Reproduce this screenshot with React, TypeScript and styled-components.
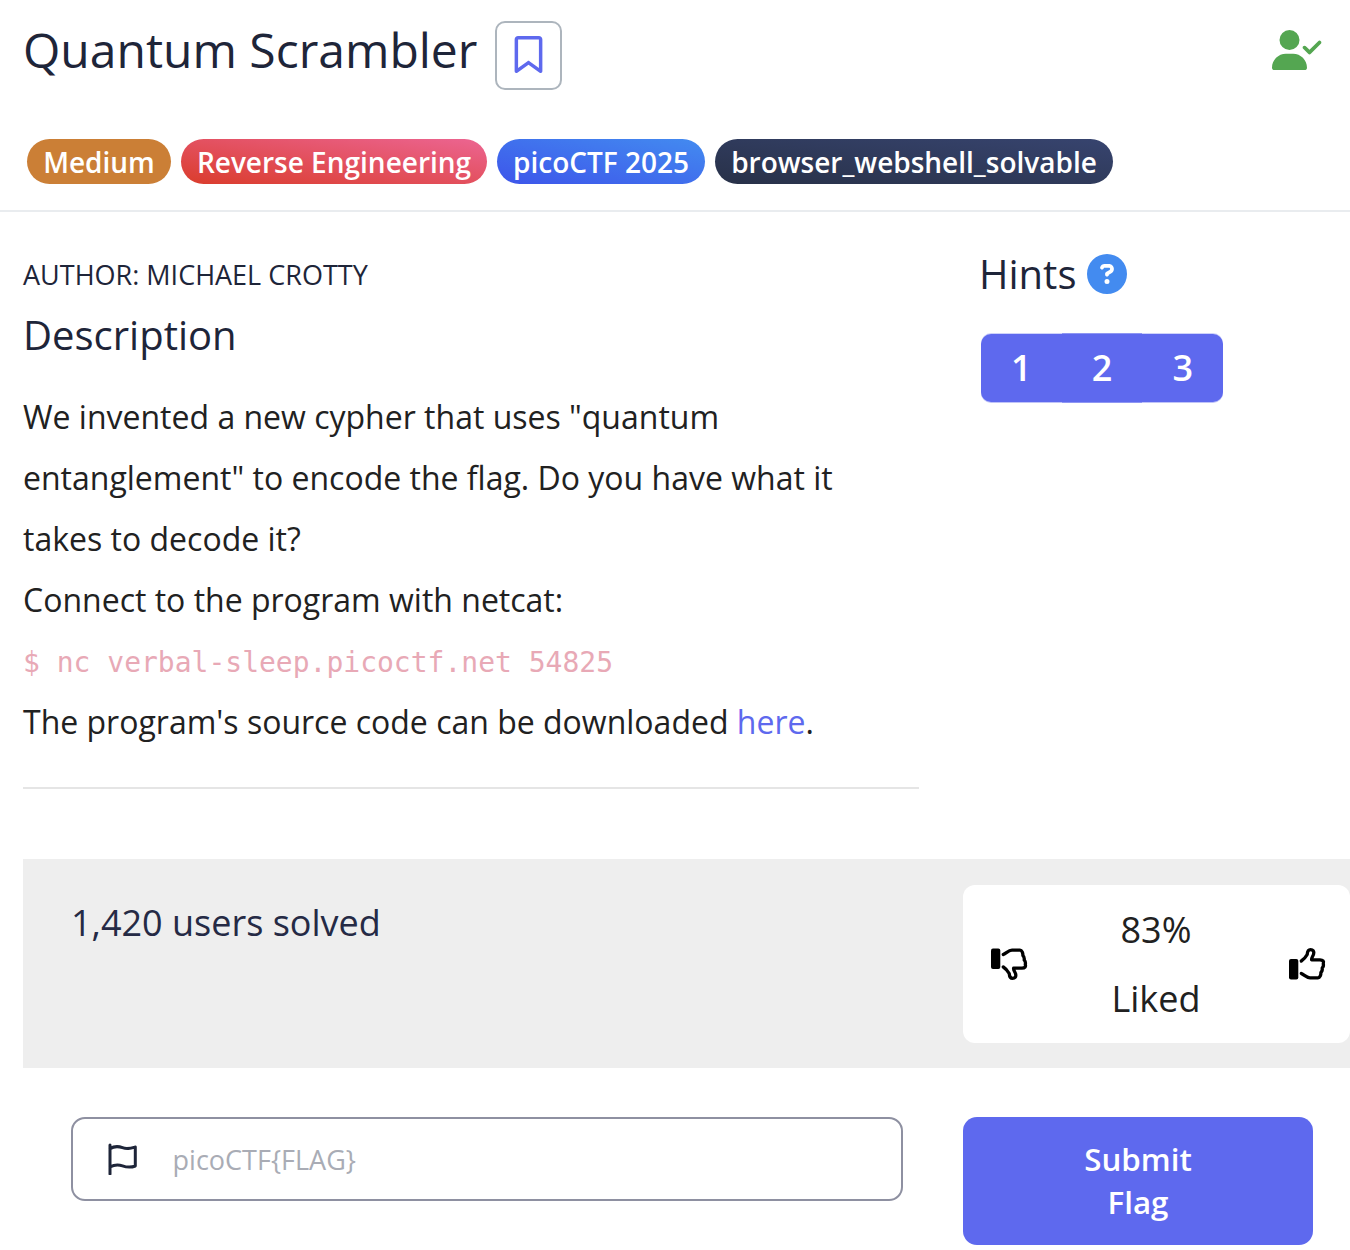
import React from "react";
import styled, { createGlobalStyle } from "styled-components";
import { FaUserCheck, FaRegBookmark, FaCircleQuestion } from "react-icons/fa6";

const GlobalStyle = createGlobalStyle`
  *, *::before, *::after { box-sizing: border-box; }
  html, body { margin: 0; background: #fff; overflow: hidden; }
  body { font-family: "Open Sans", "Noto Sans", sans-serif; color: #212529; }
  h1, h2, p { margin: 0; font-weight: 400; }
  svg { display: block; }
`;

const Page = styled.div`
  width: 1350px;
  height: 1250px;
  overflow: hidden;
  display: flex;
  flex-direction: column;
`;

const Header = styled.header`
  height: 212px;
  flex: none;
  border-bottom: 2px solid #e9ecef;
  padding: 20px 28px 0 23px;
`;

const TitleRow = styled.div`
  display: flex;
  align-items: flex-start;
  height: 119px;
`;

const Title = styled.h1`
  font-size: 48px;
  line-height: 60px;
  color: #1e2539;
  white-space: nowrap;
  width: 472px;
`;

const BookmarkButton = styled.button`
  width: 67px;
  height: 69px;
  margin-top: 0.5px;
  padding: 0 0 1px;
  border: 2px solid #adb5bd;
  border-radius: 10px;
  background: #fff;
  color: #5e69ee;
  display: grid;
  place-items: center;
`;

const Solved = styled.span`
  margin: 10.4px 0 0 auto;
  color: #54a651;
`;

const SolvedIcon = styled(FaUserCheck)`
  width: 50px;
  height: 40px;
`;

const Tags = styled.div`
  display: flex;
  gap: 10px;
  padding-left: 4px;
`;

const Tag = styled.span<{ $fill: string; $width: number }>`
  width: ${(p) => p.$width}px;
  height: 45px;
  border-radius: 23px;
  background: ${(p) => p.$fill};
  color: #fff;
  font-size: 28px;
  font-weight: 600;
  line-height: 46px;
  text-align: center;
  white-space: nowrap;
`;

const Main = styled.main`
  display: flex;
  height: 647px;
  flex: none;
  padding-left: 23px;
`;

const Details = styled.section`
  width: 896px;
  height: 577px;
  border-bottom: 2px solid #e5e5e5;
  padding-top: 43px;
`;

const Author = styled.p`
  font-size: 27px;
  line-height: 40px;
  color: #1e2539;
  text-transform: uppercase;
`;

const Heading = styled.h2`
  font-size: 40px;
  line-height: 48px;
  color: #1e2539;
`;

const Description = styled(Heading)`
  margin-top: 16px;
`;

const Body = styled.div`
  margin-top: 27px;
  font-size: 32px;
  line-height: 61px;
  color: #212121;
  white-space: nowrap;
`;

const Command = styled.code`
  display: block;
  height: 61px;
  padding-top: 2px;
  font-family: "DejaVu Sans Mono", monospace;
  font-size: 28px;
  line-height: 61px;
  color: #e8a9b6;
`;

const Link = styled.a`
  color: #5e69ee;
`;

const Hints = styled.aside`
  margin-left: 60px;
  padding-top: 38px;
`;

const HintsTitle = styled.div`
  display: flex;
  align-items: center;
  gap: 11px;
  color: #438bf0;
`;

const HintGroup = styled.div`
  display: flex;
  margin: 36px 0 0 2px;
  width: 242px;
  height: 68px;
`;

const HintButton = styled.button`
  flex: 1;
  border: 0;
  padding: 0;
  background: #5e69ee;
  box-shadow: 0 -1px 0 rgba(94, 105, 238, 0.7), 0 1px 0 rgba(94, 105, 238, 0.7);
  color: #fff;
  font: 600 36px/68px "Open Sans", sans-serif;
  &:first-child, &:last-child {
    box-shadow: 0 -1px 0 rgba(94, 105, 238, 0.3), 0 1px 0 rgba(94, 105, 238, 0.4);
  }
  &:first-child { border-radius: 10px 0 0 10px; }
  &:last-child { border-radius: 0 10px 10px 0; }
`;

const Stats = styled.section`
  display: flex;
  justify-content: space-between;
  align-items: flex-start;
  flex: none;
  height: 209px;
  margin-left: 23px;
  padding: 26px 0.5px 0 48px;
  background: #eee;
`;

const SolvedCount = styled.p`
  margin-top: 13px;
  font-size: 36px;
  line-height: 50px;
  color: #252a45;
`;

const Rating = styled.div`
  display: flex;
  justify-content: space-between;
  align-items: center;
  width: 386.5px;
  height: 158px;
  padding: 0 23.5px 0 28px;
  border-radius: 12px;
  background: #fff;
`;

const RatingText = styled.div`
  padding-right: 5px;
  font-size: 36px;
  line-height: 69px;
  color: #212121;
  text-align: center;
`;

const SubmitRow = styled.form`
  display: flex;
  align-items: flex-start;
  gap: 60px;
  padding: 49px 37px 0 71px;
`;

const FlagField = styled.label`
  display: flex;
  align-items: center;
  gap: 35px;
  width: 832px;
  height: 84px;
  padding-left: 34.6px;
  border: 2px solid #8e90a1;
  border-radius: 14px;
`;

const FlagInput = styled.input`
  flex: 1;
  min-width: 0;
  padding: 2px 0 0;
  border: 0;
  outline: 0;
  background: transparent;
  font: 400 27px/40px "Open Sans", sans-serif;
  &::placeholder { color: #a9acb5; opacity: 1; }
`;

const SubmitButton = styled.button`
  width: 350px;
  height: 128px;
  padding: 0 100px;
  border: 0;
  border-radius: 14px;
  background: #5e69ee;
  color: #fff;
  font: 600 31.3px/43px "Open Sans", sans-serif;
`;

const ThumbIcon = ({ down = false }: { down?: boolean }) => (
  <svg width="37" height="32" viewBox="0 0 37 32">
    <g transform={down ? "translate(0 32) scale(1 -1)" : undefined}>
      <rect x="0" y="11" width="9.3" height="20.5" rx="2" fill="#000" />
      <path
        d="M12.300 13C15 11.300 16.500 9.500 18.200 6.500C18.500 3 19.500 1.700 21.500 1.700C24 1.700 25.300 3.300 24.600 6C24.200 8 22.300 9.500 22.600 11.900H31C34 11.900 35 13.300 34.300 15.500C34.700 17.500 34.300 19 33.200 20C33.500 22 33 23.500 31.900 24.500C32 27 31 29.800 29 29.800H21C17.500 29.800 15.500 27 12.300 25.500"
        fill="none"
        stroke="#000"
        strokeWidth="3.3"
        strokeLinecap="round"
        strokeLinejoin="round"
      />
    </g>
  </svg>
);

const FlagIcon = () => (
  <svg width="30" height="32" viewBox="0 0 30 32">
    <path
      d="M2 2V31M2 5.700C6 3.200 10 3 14.500 4.700C19 6.400 22 5.500 27.300 4V23C22.500 24.800 19 24.500 14.500 22.800C10 21.300 6 21.800 2 23.800"
      fill="none"
      stroke="#1e2539"
      strokeWidth="3"
      strokeLinecap="round"
      strokeLinejoin="round"
    />
  </svg>
);

const tags = [
  { label: "Medium", width: 144, fill: "#cb7f36" },
  { label: "Reverse Engineering", width: 306, fill: "linear-gradient(to top right, #da3c2c, #ec6592)" },
  { label: "picoCTF 2025", width: 208, fill: "linear-gradient(to top right, #3d55ea, #438bf0)" },
  { label: "browser_webshell_solvable", width: 398, fill: "linear-gradient(to top right, #283148, #37446f)" },
];

export default function App() {
  return (
    <>
      <GlobalStyle />
      <Page>
        <Header>
          <TitleRow>
            <Title>Quantum Scrambler</Title>
            <BookmarkButton aria-label="Bookmark">
              <FaRegBookmark size={37} />
            </BookmarkButton>
            <Solved>
              <SolvedIcon />
            </Solved>
          </TitleRow>
          <Tags>
            {tags.map((t) => (
              <Tag key={t.label} $fill={t.fill} $width={t.width}>{t.label}</Tag>
            ))}
          </Tags>
        </Header>
        <Main>
          <Details>
            <Author>Author: Michael Crotty</Author>
            <Description>Description</Description>
            <Body>
              <p>We invented a new cypher that uses "quantum<br />entanglement" to encode the flag. Do you have what it<br />takes to decode it?</p>
              <p>Connect to the program with netcat:</p>
              <Command>$ nc verbal-sleep.picoctf.net 54825</Command>
              <p>The program's source code can be downloaded <Link>here</Link>.</p>
            </Body>
          </Details>
          <Hints>
            <HintsTitle>
              <Heading>Hints</Heading>
              <FaCircleQuestion size={40} />
            </HintsTitle>
            <HintGroup>
              {[1, 2, 3].map((n) => <HintButton key={n}>{n}</HintButton>)}
            </HintGroup>
          </Hints>
        </Main>
        <Stats>
          <SolvedCount>1,420 users solved</SolvedCount>
          <Rating>
            <ThumbIcon down />
            <RatingText>83%<br />Liked</RatingText>
            <ThumbIcon />
          </Rating>
        </Stats>
        <SubmitRow>
          <FlagField>
            <FlagIcon />
            <FlagInput placeholder="picoCTF{FLAG}" />
          </FlagField>
          <SubmitButton type="button">Submit Flag</SubmitButton>
        </SubmitRow>
      </Page>
    </>
  );
}
